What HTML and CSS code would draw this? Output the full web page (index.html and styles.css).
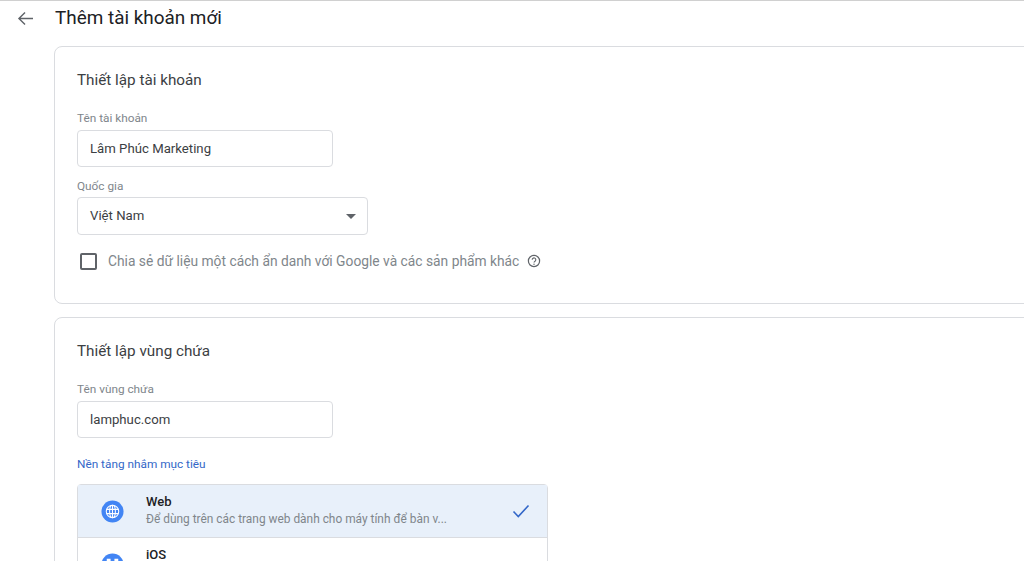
FILE: index.html
```html
<!DOCTYPE html>
<html lang="vi">
<head>
<meta charset="utf-8">
<title>Thêm tài khoản mới</title>
<link rel="stylesheet" href="styles.css">
</head>
<body>
<div class="page">
  <header class="topbar">
    <svg class="back" viewBox="0 0 18 16" width="17" height="15"><path d="M17 8H2M8.5 1.5 2 8l6.5 6.5" fill="none" stroke="#5f6368" stroke-width="1.5"/></svg>
    <h1 class="title">Thêm tài khoản mới</h1>
  </header>
  <main class="content">
    <section class="card card-account">
      <h2 class="card-title">Thiết lập tài khoản</h2>
      <label class="field-label">Tên tài khoản</label>
      <div class="input">Lâm Phúc Marketing</div>
      <label class="field-label label-country">Quốc gia</label>
      <div class="input select">Việt Nam<span class="caret"></span></div>
      <div class="check-row">
        <span class="checkbox"></span>
        <span class="check-text">Chia sẻ dữ liệu một cách ẩn danh với Google và các sản phẩm khác</span>
        <svg class="help" viewBox="0 0 14 14" width="14" height="14"><circle cx="7" cy="7" r="5.6" fill="none" stroke="#5f6368" stroke-width="1.2"/><path d="M5.2 5.7a1.8 1.8 0 1 1 2.8 1.5c-.6.4-1 .7-1 1.4" fill="none" stroke="#5f6368" stroke-width="1.1"/><circle cx="7" cy="10.2" r=".7" fill="#5f6368"/></svg>
      </div>
    </section>
    <section class="card card-container">
      <h2 class="card-title">Thiết lập vùng chứa</h2>
      <label class="field-label">Tên vùng chứa</label>
      <div class="input">lamphuc.com</div>
      <div class="platform-label">Nền tảng nhắm mục tiêu</div>
      <div class="platforms">
        <div class="platform selected">
          <svg class="p-icon" viewBox="0 0 24 24" width="23" height="23"><circle cx="12" cy="12" r="11.5" fill="#4285f4"/><g fill="none" stroke="#fff" stroke-width="1.1"><circle cx="12" cy="12" r="6.5"/><ellipse cx="12" cy="12" rx="3" ry="6.5"/><path d="M5.8 9.8h12.4M5.8 14.2h12.4M12 5.5v13"/></g></svg>
          <div class="p-text">
            <div class="p-name">Web</div>
            <div class="p-desc">Để dùng trên các trang web dành cho máy tính để bàn v...</div>
          </div>
          <svg class="p-check" viewBox="0 0 18 14" width="18" height="14"><path d="M1.5 7.5 6.3 12.5 16.5 1.5" fill="none" stroke="#3367c8" stroke-width="1.6"/></svg>
        </div>
        <div class="platform">
          <svg class="p-icon" viewBox="0 0 24 24" width="23" height="23"><circle cx="12" cy="12" r="11.5" fill="#4285f4"/><rect x="6" y="6" width="4" height="3" fill="#fff"/><rect x="14" y="6" width="4" height="3" fill="#fff"/></svg>
          <div class="p-text">
            <div class="p-name">iOS</div>
          </div>
        </div>
      </div>
    </section>
  </main>
</div>
</body>
</html>
```
FILE: styles.css
```css
* { box-sizing: border-box; }
html, body { margin: 0; height: 561px; overflow: hidden; background: #fff; }
body { font-family: Roboto, "Liberation Sans", sans-serif; color: #202124; }
.page { height: 561px; overflow: hidden; border-top: 1px solid #d0d0d0; }
.topbar { display: flex; align-items: center; height: 34px; padding-left: 17px; }
.back { flex: none; }
.title { margin: 0 0 0 21px; font-size: 18.9px; font-weight: 400; line-height: 34px; color: #202124; }
.content { padding: 11px 0 0 54px; width: 1040px; }
.card { border: 1px solid #dadce0; border-radius: 8px; padding: 0 22px; background: #fff; }
.card-account { height: 258px; margin-bottom: 13px; }
.card-container { height: 300px; }
.card-title { margin: 0; padding-top: 24px; font-size: 15.25px; font-weight: 400; line-height: 18px; color: #3c4043; }
.field-label { display: block; margin-top: 22px; font-size: 11.8px; line-height: 14px; color: #80868b; }
.input { width: 256px; height: 37px; margin-top: 5px; padding-left: 12px; border: 1px solid #dadce0; border-radius: 4px; font-size: 13.2px; line-height: 35px; color: #3c4043; }
.label-country { margin-top: 12px; }
.select { position: relative; width: 291px; height: 38px; margin-top: 4px; line-height: 36px; }
.caret { position: absolute; right: 11px; top: 16px; border-left: 5px solid transparent; border-right: 5px solid transparent; border-top: 5px solid #5f6368; }
.check-row { display: flex; align-items: center; margin-top: 16px; padding-left: 3px; height: 20px; }
.checkbox { flex: none; width: 17px; height: 17px; border: 2px solid #5f6368; border-radius: 2px; }
.check-text { margin-left: 11px; font-size: 13.8px; color: #80868b; white-space: nowrap; }
.help { flex: none; margin-left: 8px; }
.platform-label { margin-top: 19px; font-size: 11.8px; line-height: 14px; color: #3367c8; }
.platforms { width: 471px; margin-top: 13px; border: 1px solid #dadce0; border-radius: 4px 4px 0 0; }
.platform { display: flex; align-items: center; height: 53px; padding-left: 23px; border-bottom: 1px solid #dadce0; }
.platform.selected { background: #e8f0fa; }
.p-icon { flex: none; }
.p-text { align-self: flex-start; margin-left: 22px; padding-top: 9px; width: 352px; }
.p-name { font-size: 13px; line-height: 16px; font-weight: 500; color: #202124; }
.p-desc { margin-top: 2px; font-size: 11.9px; line-height: 14px; color: #80868b; white-space: nowrap; }
.p-check { flex: none; margin-left: 14px; }
```
